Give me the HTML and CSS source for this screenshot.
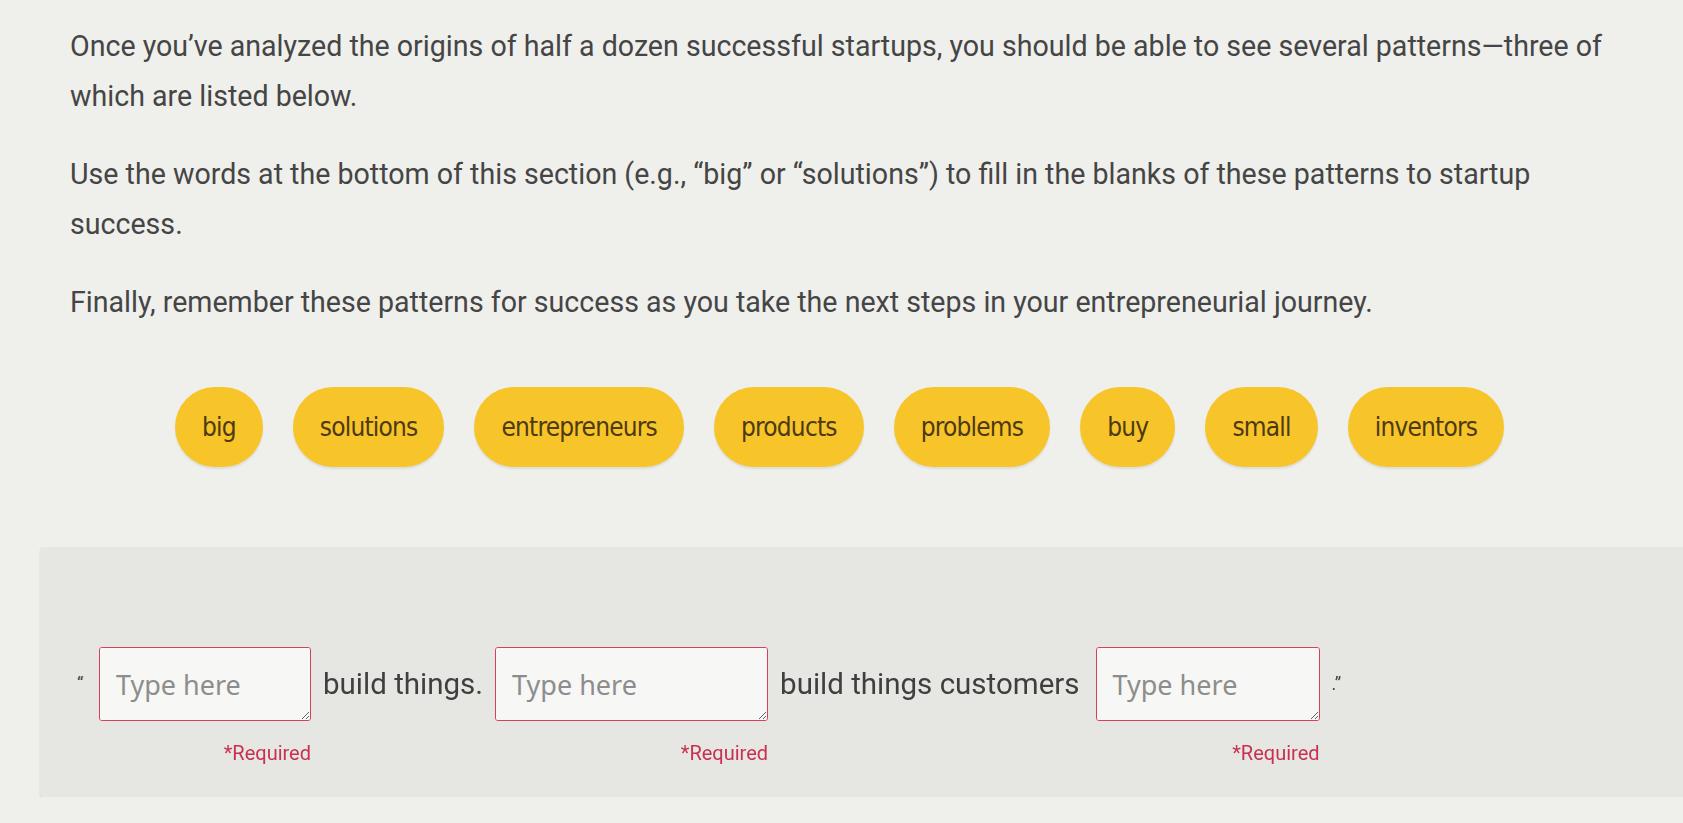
FILE: index.html
```
<!DOCTYPE html>
<html lang="en">
<head>
    <meta charset="UTF-8">
    <title>Patterns for startup success</title>
    <link rel="stylesheet" href="styles.css">
</head>
<body>
<!-- intro text -->
<div class="intro">
    <p>Once you’ve analyzed the origins of half a dozen successful startups, you should be able to see several patterns—three of which are listed below.</p>
    <p>Use the words at the bottom of this section (e.g., “big” or “solutions”) to fill in the blanks of these patterns to startup success.</p>
    <p>Finally, remember these patterns for success as you take the next steps in your entrepreneurial journey.</p>
</div>

<!-- word bank -->
<ul class="words">
    <li>big</li>
    <li>solutions</li>
    <li>entrepreneurs</li>
    <li>products</li>
    <li>problems</li>
    <li>buy</li>
    <li>small</li>
    <li>inventors</li>
</ul>

<!-- fill in the blanks -->
<div class="panel">
    <div class="sentence">
        <span class="quote">“</span>
        <div class="blank">
            <textarea placeholder="Type here"></textarea>
            <span class="required">*Required</span>
        </div>
        <span class="words-text">build things.</span>
        <div class="blank wide">
            <textarea placeholder="Type here"></textarea>
            <span class="required">*Required</span>
        </div>
        <span class="words-text">build things customers</span>
        <div class="blank last">
            <textarea placeholder="Type here"></textarea>
            <span class="required">*Required</span>
        </div>
        <span class="quote end">.”</span>
    </div>
</div>
</body>
</html>
```

FILE: styles.css
```
html, body {
    margin: 0;
    background-color: #efefec;
    font-family: Roboto, "Liberation Sans", sans-serif;
    color: #454545;
}
body {
    padding: 21px 0 0 0;
    overflow: hidden;
}
.intro {
    width: 1560px;
    margin-left: 70px;
}
.intro p {
    font-size: 28.6px;
    line-height: 50px;
    margin: 0 0 28px 0;
}
.intro p:last-child {
    margin-bottom: 0;
}
.words {
    list-style-type: none;
    display: flex;
    flex-direction: row;
    gap: 30px;
    margin: 60px 0 0 175px;
    padding: 0;
}
.words li {
    background: #f7c42a;
    color: #4d3a12;
    height: 80px;
    padding: 0 27px;
    border-radius: 40px;
    display: flex;
    align-items: center;
    justify-content: center;
    font-family: "Liberation Sans Narrow", "DejaVu Sans", sans-serif;
    font-stretch: condensed;
    font-size: 26px;
    letter-spacing: -0.8px;
    box-shadow: 0 2px 2px rgba(0, 0, 0, .08);
}
.panel {
    margin: 80px 0 0 40px;
    height: 250px;
    background-color: #e6e6e3;
    border-radius: 3px 0 0 3px;
    box-shadow: 0 2px 2px rgba(0, 0, 0, .12);
    padding: 100px 0 0 37px;
    box-sizing: border-box;
}
.sentence {
    display: flex;
    align-items: flex-start;
    gap: 12px;
}
.quote {
    font-size: 18px;
    line-height: 74px;
    width: 10px;
}
.words-text {
    font-size: 29.5px;
    line-height: 74px;
    color: #3f3f3f;
}
.blank {
    display: flex;
    flex-direction: column;
    align-items: flex-end;
}
.blank textarea {
    width: 212px;
    height: 74px;
    box-sizing: border-box;
    border: 1.5px solid #d6405a;
    border-radius: 3px;
    background: #f7f7f5;
    padding: 18px 16px;
    font-family: "Noto Sans", sans-serif;
    font-size: 27px;
    color: #444;
    resize: both;
}
.blank.wide textarea {
    width: 273px;
}
.blank.last {
    margin-left: 4px;
}
.blank.last textarea {
    width: 224px;
}
.blank textarea::placeholder {
    color: #8d8d8d;
}
.required {
    margin-top: 20px;
    font-size: 20px;
    font-family: "Liberation Sans Narrow", Roboto, sans-serif;
    color: #c93150;
}
```
